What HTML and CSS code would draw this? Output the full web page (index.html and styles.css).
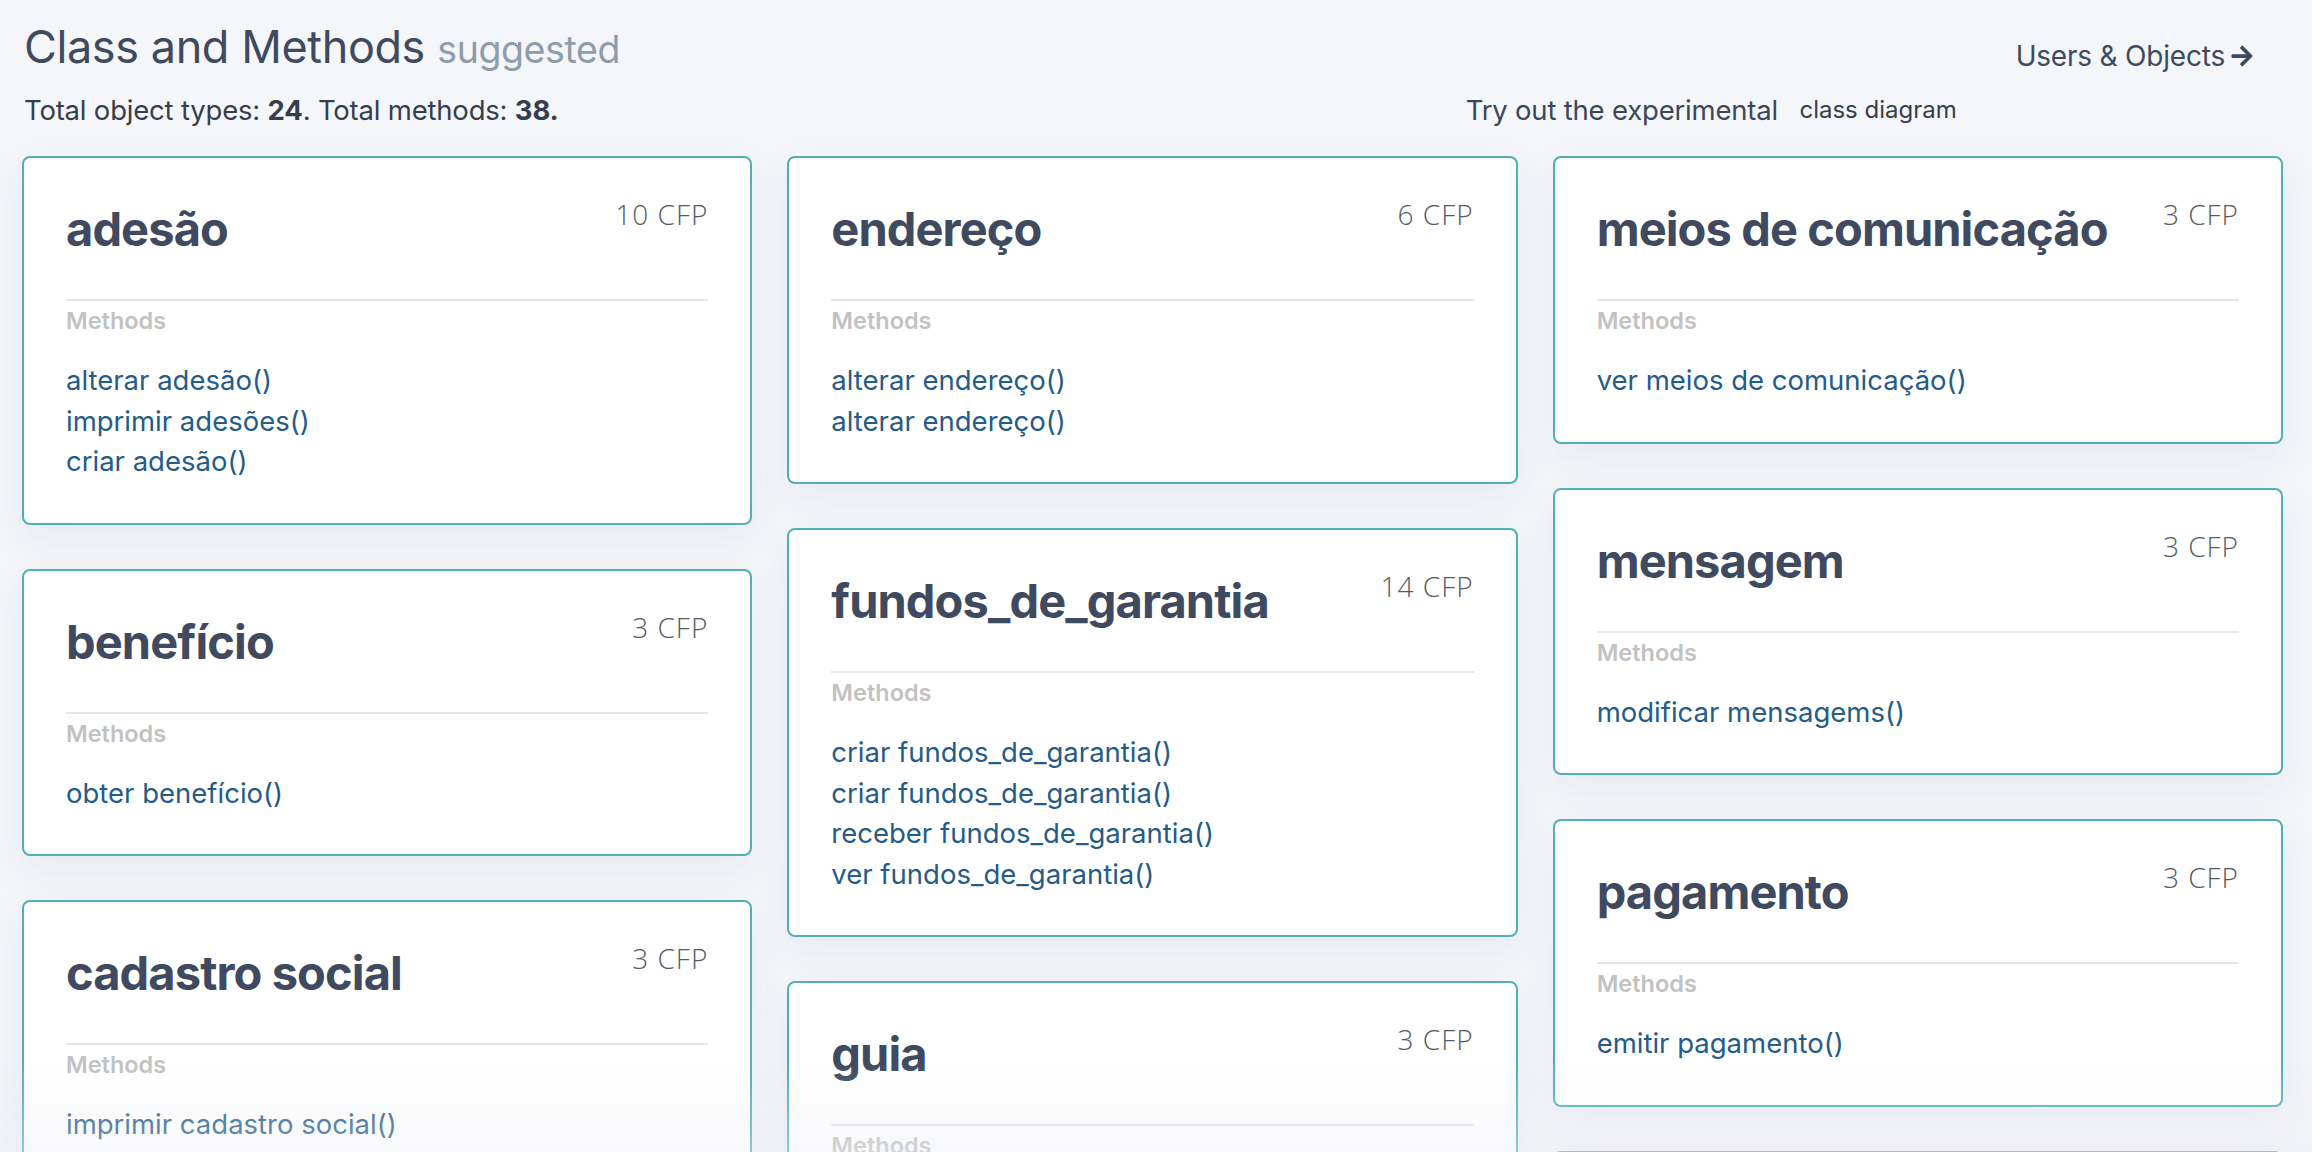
FILE: index.html
```html
<!DOCTYPE html>
<html lang="pt">
<head>
  <meta charset="UTF-8">
  <title>Class and Methods</title>
  <link rel="stylesheet" href="styles.css">
</head>
<body>
  <header class="page-head">
    <div class="head-row">
      <h1 class="page-title">Class and Methods <span class="muted">suggested</span></h1>
      <a class="nav-link" href="#">Users &amp; Objects
        <svg class="arrow" viewBox="0 0 448 512"><path d="M190.5 66.9l22.2-22.2c9.4-9.4 24.6-9.4 33.9 0L441 239c9.4 9.4 9.4 24.6 0 33.9L246.6 467.3c-9.4 9.4-24.6 9.4-33.9 0l-22.2-22.2c-9.5-9.5-9.3-25 .4-34.3L311.4 296H24c-13.3 0-24-10.7-24-24v-32c0-13.3 10.7-24 24-24h287.4L190.9 101.2c-9.8-9.3-10-24.8-.4-34.3z"/></svg>
      </a>
    </div>
    <div class="head-row split">
      <p class="totals">Total object types: <b>24</b>. Total methods: <b>38.</b></p>
      <div class="experimental">Try out the experimental <button class="ghost-button">class diagram</button></div>
    </div>
  </header>

  <main class="board">
    <div class="stack">
      <section class="card">
        <div class="card-head"><h2>adesão</h2><span class="cfp">10 CFP</span></div>
        <hr>
        <p class="label">Methods</p>
        <ul class="methods">
          <li><a href="#">alterar adesão()</a></li>
          <li><a href="#">imprimir adesões()</a></li>
          <li><a href="#">criar adesão()</a></li>
        </ul>
      </section>
      <section class="card">
        <div class="card-head"><h2>benefício</h2><span class="cfp">3 CFP</span></div>
        <hr>
        <p class="label">Methods</p>
        <ul class="methods">
          <li><a href="#">obter benefício()</a></li>
        </ul>
      </section>
      <section class="card">
        <div class="card-head"><h2>cadastro social</h2><span class="cfp">3 CFP</span></div>
        <hr>
        <p class="label">Methods</p>
        <ul class="methods">
          <li><a href="#">imprimir cadastro social()</a></li>
        </ul>
      </section>
    </div>

    <div class="stack">
      <section class="card">
        <div class="card-head"><h2>endereço</h2><span class="cfp">6 CFP</span></div>
        <hr>
        <p class="label">Methods</p>
        <ul class="methods">
          <li><a href="#">alterar endereço()</a></li>
          <li><a href="#">alterar endereço()</a></li>
        </ul>
      </section>
      <section class="card">
        <div class="card-head"><h2>fundos_de_garantia</h2><span class="cfp">14 CFP</span></div>
        <hr>
        <p class="label">Methods</p>
        <ul class="methods">
          <li><a href="#">criar fundos_de_garantia()</a></li>
          <li><a href="#">criar fundos_de_garantia()</a></li>
          <li><a href="#">receber fundos_de_garantia()</a></li>
          <li><a href="#">ver fundos_de_garantia()</a></li>
        </ul>
      </section>
      <section class="card">
        <div class="card-head"><h2>guia</h2><span class="cfp">3 CFP</span></div>
        <hr>
        <p class="label">Methods</p>
        <ul class="methods">
          <li><a href="#">emitir guia()</a></li>
        </ul>
      </section>
    </div>

    <div class="stack">
      <section class="card">
        <div class="card-head"><h2>meios de comunicação</h2><span class="cfp">3 CFP</span></div>
        <hr>
        <p class="label">Methods</p>
        <ul class="methods">
          <li><a href="#">ver meios de comunicação()</a></li>
        </ul>
      </section>
      <section class="card">
        <div class="card-head"><h2>mensagem</h2><span class="cfp">3 CFP</span></div>
        <hr>
        <p class="label">Methods</p>
        <ul class="methods">
          <li><a href="#">modificar mensagems()</a></li>
        </ul>
      </section>
      <section class="card">
        <div class="card-head"><h2>pagamento</h2><span class="cfp">3 CFP</span></div>
        <hr>
        <p class="label">Methods</p>
        <ul class="methods">
          <li><a href="#">emitir pagamento()</a></li>
        </ul>
      </section>
      <section class="card">
        <div class="card-head"><h2>participante</h2><span class="cfp">3 CFP</span></div>
        <hr>
        <p class="label">Methods</p>
        <ul class="methods">
          <li><a href="#">ver participante()</a></li>
        </ul>
      </section>
    </div>
  </main>

  <div class="fade"></div>
</body>
</html>
```

FILE: styles.css
```css
* {
  box-sizing: border-box;
  margin: 0;
  padding: 0;
}
body {
  background: #f5f6fa;
  font-family: Inter, "Noto Sans", sans-serif;
  color: #3d4658;
  padding: 19px 29px 0 22px;
  height: 100vh;
  overflow: hidden;
}
a {
  text-decoration: none;
}
.head-row {
  display: flex;
  justify-content: space-between;
  align-items: flex-start;
}
.page-title {
  font-size: 45px;
  font-weight: 400;
  line-height: 56px;
  color: #3f4a60;
  letter-spacing: -0.4px;
  padding-left: 2px;
}
.page-title .muted {
  font-size: 37.5px;
  color: #8e9dab;
}
.nav-link {
  font-size: 28px;
  line-height: 34px;
  color: #3f4a60;
  display: flex;
  align-items: center;
  gap: 6px;
  margin-top: 20px;
  margin-right: 30px;
  letter-spacing: -0.2px;
}
.arrow {
  width: 22px;
  height: 24px;
  fill: #3f4a60;
}
.split {
  height: 38px;
  margin-top: 13px;
}
.split > * {
  flex: 1;
}
.totals {
  font-size: 27.5px;
  line-height: 38px;
  color: #363e4c;
  padding-left: 2px;
  letter-spacing: -0.2px;
}
.totals b {
  font-weight: 700;
}
.experimental {
  text-align: center;
  font-size: 27.5px;
  line-height: 38px;
  color: #3d4658;
  letter-spacing: -0.2px;
}
.ghost-button {
  font-family: inherit;
  font-size: 24px;
  line-height: 38px;
  color: #363e4c;
  background: none;
  border: none;
  padding: 0 14px;
  vertical-align: top;
  cursor: pointer;
}
.board {
  display: grid;
  grid-template-columns: repeat(3, 1fr);
  gap: 35px;
  margin-top: 27px;
}
.stack {
  display: flex;
  flex-direction: column;
  gap: 44px;
}
.card {
  background: #fff;
  border: 2px solid #4fb1b4;
  border-radius: 8px;
  padding: 44px 42px 41px;
  box-shadow: 0 14px 40px rgba(40, 50, 80, 0.07);
}
.card-head {
  display: flex;
  justify-content: space-between;
  align-items: flex-start;
}
.card h2 {
  font-size: 47px;
  font-weight: 700;
  line-height: 54px;
  color: #3f4a60;
  letter-spacing: -0.9px;
}
.cfp {
  font-family: "Open Sans", sans-serif;
  font-weight: 300;
  font-size: 28px;
  line-height: 30px;
  color: #555b66;
  margin-top: -3px;
  letter-spacing: 1px;
  white-space: nowrap;
}
.card hr {
  border: none;
  border-top: 2px solid #e6e6e8;
  margin-top: 43px;
}
.label {
  font-size: 23.5px;
  font-weight: 600;
  line-height: 33px;
  color: #c2c2c2;
  margin-top: 3px;
}
.methods {
  list-style: none;
  margin-top: 23px;
}
.methods li {
  font-size: 27.5px;
  line-height: 40.5px;
}
.methods a {
  color: #245b88;
}
.fade {
  position: fixed;
  left: 0;
  right: 0;
  bottom: 0;
  height: 90px;
  background: linear-gradient(rgba(236, 238, 243, 0), rgba(236, 238, 243, 0.4));
  pointer-events: none;
}
```
